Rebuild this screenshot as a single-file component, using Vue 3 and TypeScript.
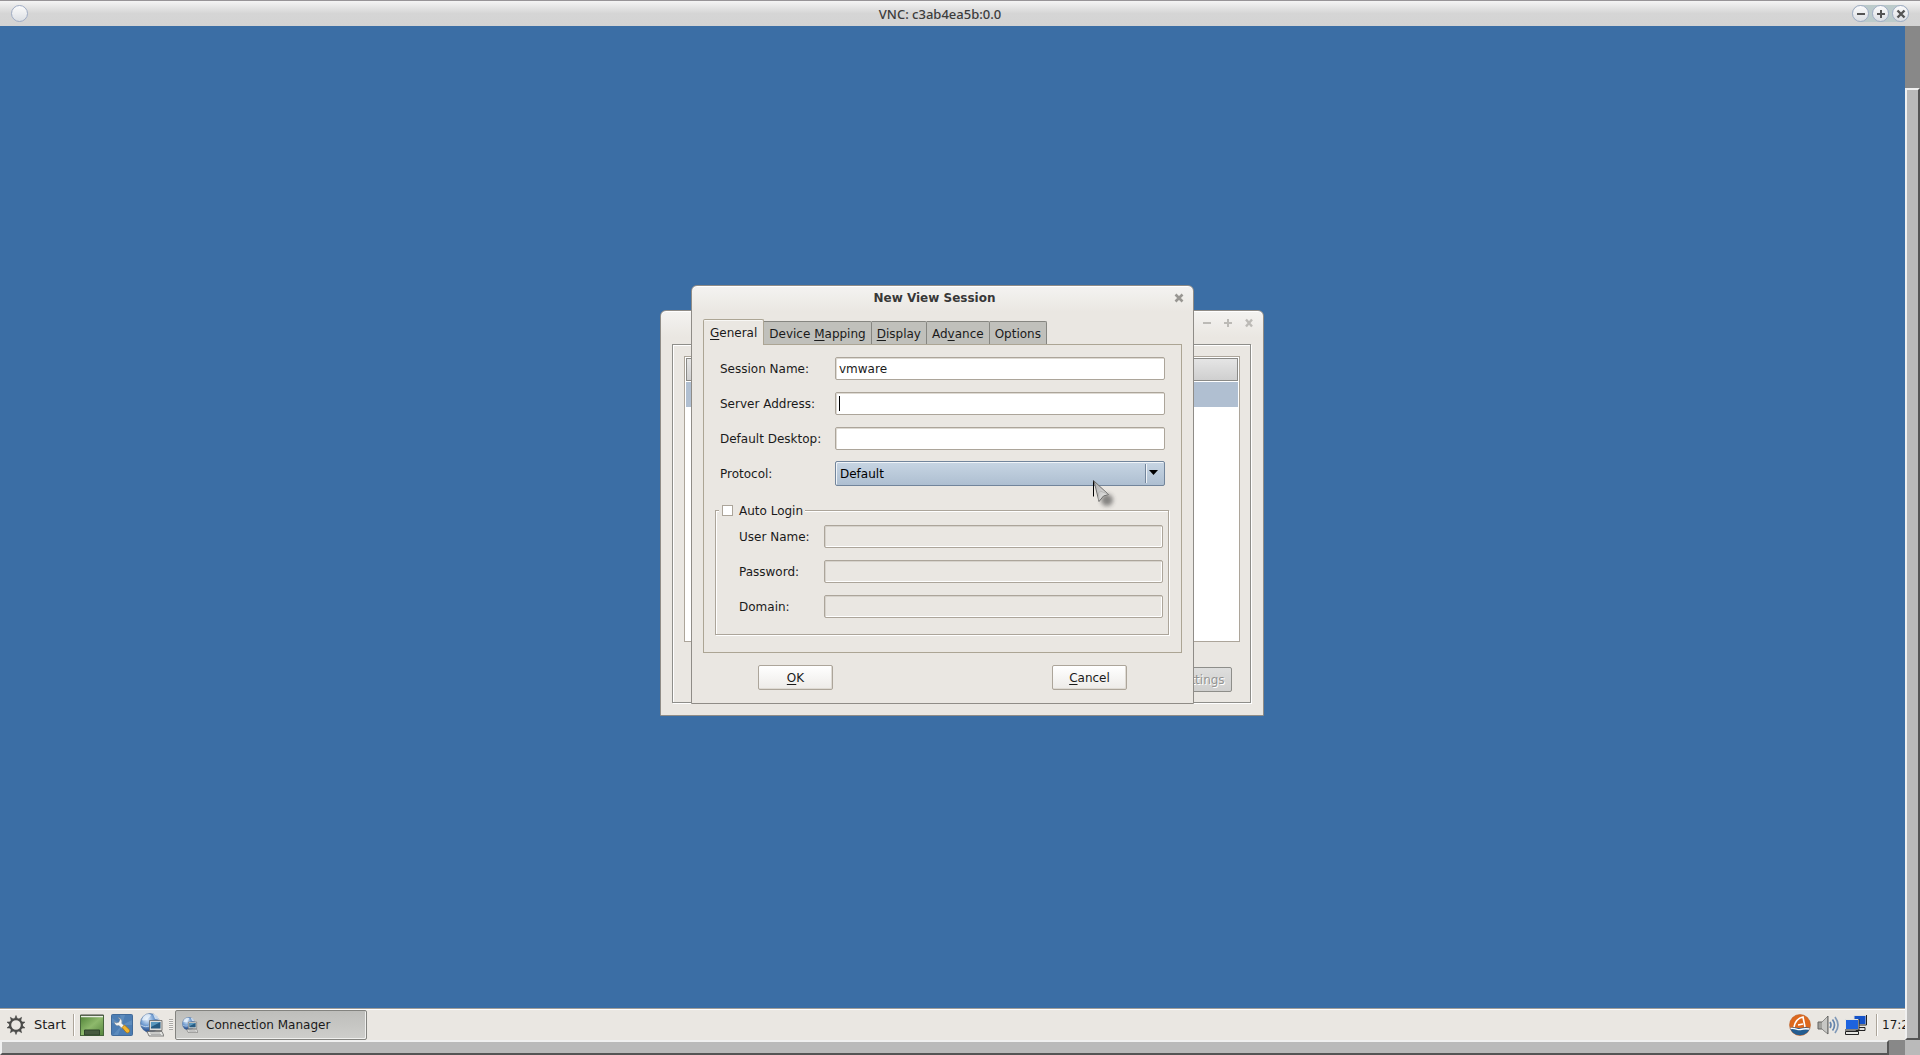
<script setup lang="ts">
import { ref } from 'vue'

interface Tab {
  id: string
  before: string
  key: string
  after: string
}

interface Field {
  id: string
  label: string
}

const tabs: Tab[] = [
  { id: 'general', before: '', key: 'G', after: 'eneral' },
  { id: 'mapping', before: 'Device ', key: 'M', after: 'apping' },
  { id: 'display', before: '', key: 'D', after: 'isplay' },
  { id: 'advance', before: 'Ad', key: 'v', after: 'ance' },
  { id: 'options', before: 'Options', key: '', after: '' },
]

const loginFields: Field[] = [
  { id: 'user', label: 'User Name:' },
  { id: 'password', label: 'Password:' },
  { id: 'domain', label: 'Domain:' },
]

const activeTab = ref('general')
const sessionName = ref('vmware')
const serverAddress = ref('')
const defaultDesktop = ref('')
const protocol = ref('Default')
const autoLogin = ref(false)
</script>

<template>
  <div class="viewer">
    <header class="viewer-bar">
      <span class="orb"></span>
      <span class="viewer-title">VNC: c3ab4ea5b:0.0</span>
      <span class="viewer-controls">
        <button class="orb" type="button" aria-label="Minimize">
          <svg width="16" height="16" viewBox="0 0 16 16"><path d="M4 8h8" stroke="#555" stroke-width="2" /></svg>
        </button>
        <button class="orb" type="button" aria-label="Maximize">
          <svg width="16" height="16" viewBox="0 0 16 16"><path d="M4 8h8M8 4v8" stroke="#555" stroke-width="2" /></svg>
        </button>
        <button class="orb" type="button" aria-label="Close">
          <svg width="16" height="16" viewBox="0 0 16 16"><path d="M4.500 4.500l7 7M11.500 4.500l-7 7" stroke="#555" stroke-width="2.400" /></svg>
        </button>
      </span>
    </header>

    <div class="viewer-body">
      <div class="remote">
        <main class="desktop">
          <section class="window manager">
            <div class="manager-bar">
              <svg width="50" height="10" viewBox="0 0 50 10" fill="none" stroke="#bcbab6">
                <path d="M0 5h8" stroke-width="2" />
                <path d="M21 5h8M25 1v8" stroke-width="2" />
                <path d="M43 1.500l6 7M49 1.500l-6 7" stroke-width="2.400" />
              </svg>
            </div>
            <div class="manager-frame">
              <div class="list">
                <div class="list-head"></div>
                <div class="list-selected"></div>
              </div>
              <div class="manager-actions">
                <button class="settings" type="button" disabled>Settings</button>
              </div>
            </div>
          </section>

          <form class="window dialog" @submit.prevent>
            <div class="dialog-bar">
              <span>New View Session</span>
              <button class="dialog-close" type="button" aria-label="Close">
                <svg width="10" height="10" viewBox="0 0 10 10"><path d="M1.500 1.500l7 7M8.500 1.500l-7 7" stroke="#999793" stroke-width="2.600" /></svg>
              </button>
            </div>

            <div class="tabs" role="tablist">
              <button
                v-for="tab in tabs"
                :key="tab.id"
                type="button"
                role="tab"
                class="tab"
                :class="{ active: tab.id === activeTab }"
                :aria-selected="tab.id === activeTab"
                @click="activeTab = tab.id"
              >{{ tab.before }}<u v-if="tab.key">{{ tab.key }}</u>{{ tab.after }}</button>
            </div>

            <div class="panel">
              <div class="rows">
                <div class="row">
                  <label for="session">Session Name:</label>
                  <input id="session" v-model="sessionName" class="field" type="text" />
                </div>
                <div class="row">
                  <label for="server">Server Address:</label>
                  <span class="control">
                    <input id="server" v-model="serverAddress" class="field" type="text" />
                    <i class="caret"></i>
                  </span>
                </div>
                <div class="row">
                  <label for="desktop">Default Desktop:</label>
                  <input id="desktop" v-model="defaultDesktop" class="field" type="text" />
                </div>
                <div class="row">
                  <label for="protocol">Protocol:</label>
                  <span class="control">
                    <select id="protocol" v-model="protocol" class="combo">
                      <option>Default</option>
                    </select>
                    <span class="combo-arrow">
                      <svg width="9" height="5" viewBox="0 0 9 5"><path d="M0 0h9L4.500 5z" /></svg>
                    </span>
                  </span>
                </div>
              </div>

              <fieldset class="group">
                <legend>
                  <input id="auto" v-model="autoLogin" type="checkbox" />
                  <label for="auto">Auto Login</label>
                </legend>
                <div v-for="field in loginFields" :key="field.id" class="row">
                  <label :for="field.id">{{ field.label }}</label>
                  <input
                    :id="field.id"
                    class="field"
                    :type="field.id === 'password' ? 'password' : 'text'"
                    :disabled="!autoLogin"
                  />
                </div>
              </fieldset>
            </div>

            <div class="actions">
              <button class="push" type="submit"><u>O</u>K</button>
              <button class="push" type="button"><u>C</u>ancel</button>
            </div>
          </form>

          <svg class="pointer" width="26" height="32" viewBox="0 0 26 32">
            <defs>
              <filter id="soft" x="-50%" y="-50%" width="200%" height="200%"><feGaussianBlur stdDeviation="2" /></filter>
              <linearGradient id="steel" x1="0" y1="0" x2="1" y2="1">
                <stop offset="0" stop-color="#aaa" /><stop offset="1" stop-color="#f0f0ee" />
              </linearGradient>
            </defs>
            <ellipse cx="14" cy="20" rx="6" ry="6" fill="#333" opacity=".55" filter="url(#soft)" />
            <path d="M.5.500v16" stroke="#000" />
            <path d="M1 1l14.500 13.500-5 1.500-4.500 5.500z" fill="url(#steel)" stroke="#6e6e6c" />
            <path d="M6 20l-.5-7 2-2 7 3" fill="none" stroke="#b8b8b6" />
          </svg>
        </main>

        <footer class="taskbar">
          <button class="start" type="button">
            <svg width="20" height="20" viewBox="0 0 20 20" fill="none" stroke="#4b4b49">
              <circle cx="10" cy="10" r="5.900" stroke-width="2.200" />
              <path
                d="M10 .5l1.200 3h-2.400zM15.600 2.300l-.8 3.200-1.900-1.400zM19 7.100l-2.500 2.100-.7-2.300zM19 12.900l-3.200.2.700-2.300zM15.600 17.700l-2.700-1.800 1.900-1.400zM10 19.500l-1.200-3h2.400zM4.400 17.700l.8-3.200 1.900 1.400zM1 12.900l2.500-2.100.7 2.300zM1 7.100l3.200-.2-.7 2.300zM4.400 2.300l2.700 1.800-1.900 1.400z"
                fill="#4b4b49"
                stroke-width=".6"
              />
            </svg>
            <span>Start</span>
          </button>
          <i class="divider"></i>
          <button class="launcher" type="button" aria-label="Show desktop">
            <svg width="24" height="22" viewBox="0 0 24 22">
              <defs>
                <linearGradient id="grass" x1="0" y1="0" x2="1" y2="1">
                  <stop offset="0" stop-color="#4f8136" /><stop offset=".5" stop-color="#8eb96c" /><stop offset="1" stop-color="#54843c" />
                </linearGradient>
              </defs>
              <rect x=".5" y="1.500" width="23" height="20" fill="url(#grass)" stroke="#46653a" />
              <path d="M1 2.500h22" stroke="#e8eee4" stroke-width="1.500" />
              <path d="M.5 1h23" stroke="#42453f" />
              <path d="M4.500 21v-5h15v5z" fill="#46593e" stroke="#2f432a" />
            </svg>
          </button>
          <button class="launcher" type="button" aria-label="Control panel">
            <svg width="22" height="22" viewBox="0 0 22 22">
              <rect x=".5" y=".5" width="21" height="21" rx="1" fill="#4c7db3" stroke="#426b99" />
              <path d="M11 11L1 4v5zM11 11L14 1H9zM11 11l10-5v5zM11 11L2 21h5z" fill="#79a2cc" opacity=".4" />
              <path d="M7 3.500l2 2-1.200 2.700-2.800.8-1.500-1.500c-.3 3 2 4.800 4.500 4l3 3 2.500-2.500-2.800-2.800C11.500 6.500 10 4 7 3.500z" fill="#f4f4f1" stroke="#6d7a88" stroke-width=".5" />
              <path d="M11 13.500l2.500-2.500 4.700 4.500c1.300 2-1 4.500-3 3z" fill="#f2b52f" stroke="#a87413" stroke-width=".8" />
            </svg>
          </button>
          <button class="launcher" type="button" aria-label="Connection Manager">
            <svg width="24" height="24" viewBox="0 0 24 24">
              <defs>
                <radialGradient id="globe" cx=".35" cy=".3" r=".7">
                  <stop offset="0" stop-color="#e4eefa" /><stop offset=".5" stop-color="#6f9bd0" /><stop offset="1" stop-color="#173b7a" />
                </radialGradient>
                <g id="network">
                  <circle cx="10" cy="10" r="9.500" fill="url(#globe)" stroke="#4a6d9c" stroke-width=".6" />
                  <path d="M3 4c4-4 6-3 8-2-1 3-3 3-4 5-2 0-4 1-5 0zM13 1c3 0 6 3 6 6l-4-1z" fill="#eef5fc" opacity=".75" />
                  <path d="M1 12c3 2 6 2 8 1" fill="none" stroke="#d3e3f4" stroke-width=".8" />
                  <path d="M9.500 7.500h12.500v10H9.500z" fill="#ddddda" stroke="#666" stroke-width=".8" />
                  <path d="M11 9h9.500v6.500H11z" fill="#275b82" />
                  <path d="M11 9h9.500L11 14z" fill="#5a98be" />
                  <path d="M7 18.500h15l2 4.500H9z" fill="#e5e5e2" stroke="#666" stroke-width=".8" />
                  <path d="M10 20h10M11 21.500h10" stroke="#999" stroke-width=".7" />
                </g>
              </defs>
              <use href="#network" />
            </svg>
          </button>
          <i class="grip"></i>
          <button class="task" type="button">
            <svg width="16" height="16" viewBox="0 0 24 24"><use href="#network" /></svg>
            <span>Connection Manager</span>
          </button>
          <div class="tray">
            <svg width="22" height="22" viewBox="0 0 22 22">
              <circle cx="11" cy="11" r="10.500" fill="#dd681d" stroke="#b9632d" stroke-width=".6" />
              <path d="M1 14c5-2 8 1 11 0s6-1 9 0A10.500 10.500 0 0 1 1 14z" fill="#235d91" />
              <path d="M1.500 14.500c5-1 7 2 10 1s6-1 9-.5" fill="none" stroke="#fff" stroke-width="1.400" />
              <path d="M5 13c1-5 4-9 9-10l2 10M9 11l5-1" fill="none" stroke="#fff" stroke-width="1.600" />
            </svg>
            <svg width="22" height="20" viewBox="0 0 22 20">
              <path d="M1 7h4l6-6v18l-6-5H1z" fill="#a1a19d" stroke="#656562" />
              <path d="M5 7v7l5 4V2z" fill="#d7d7d4" opacity=".7" />
              <g fill="none" stroke="#6484ac" stroke-width="1.700">
                <path d="M13 7q2 3 0 6" /><path d="M15.500 4.500q4 5.500 0 11" /><path d="M18 2q6 8 0 16" opacity=".8" />
              </g>
            </svg>
            <svg width="22" height="20" viewBox="0 0 22 20">
              <path d="M9 .5h12v9H9z" fill="#1452c9" stroke="#ddd" /><path d="M21.500 0v10H9" fill="none" stroke="#222" />
              <path d="M11 12.500h9v3h-9z" fill="#ddd" stroke="#222" />
              <path d="M.5 4.500h13v10H.5z" fill="#1d63df" stroke="#e4e4e0" /><path d="M14 4v11H0" fill="none" stroke="#222" />
              <path d="M.5 16.500h13v3H.5z" fill="#e6e6e2" stroke="#222" />
            </svg>
            <i class="divider"></i>
            <span class="clock">17:2</span>
          </div>
        </footer>
      </div>
      <div class="scroll-y"><div class="thumb-y"></div></div>
    </div>
    <div class="scroll-x"><div class="thumb-x"></div><div class="corner"></div></div>
  </div>
</template>

<style>
body {
  overflow: hidden;
}
</style>

<style scoped>
.viewer,
.viewer * {
  box-sizing: border-box;
}
.viewer {
  display: flex;
  flex-direction: column;
  height: 100vh;
  font: 12px/16px "DejaVu Sans", sans-serif;
  color: #1a1a1a;
}
button,
input,
select {
  margin: 0;
  padding: 0;
  border: 0;
  background: none;
  font: inherit;
  color: inherit;
  outline: none;
}
svg {
  display: block;
  flex: none;
}
u {
  text-decoration-thickness: 1px;
  text-underline-offset: 2px;
}

.viewer-bar {
  display: flex;
  align-items: center;
  justify-content: space-between;
  flex: none;
  height: 26px;
  padding: 0 11px;
  border-top: 1px solid #979497;
  background: linear-gradient(#f4f4f4, #d5d5d5 50%, #d3d3d3);
}
.viewer-title {
  flex: 1;
  text-align: center;
  font: 500 13px/18px "Noto Sans", sans-serif;
  color: #3c3c3c;
}
.viewer-controls {
  display: flex;
  gap: 3px;
  border-radius: 9px;
  background: #bccbcb;
}
.orb {
  display: flex;
  align-items: center;
  justify-content: center;
  flex: none;
  width: 17px;
  height: 17px;
  border: 1px solid #a0adc5;
  border-radius: 50%;
  background: linear-gradient(#fbfbfb, #dcdfe4);
}

.viewer-body {
  display: flex;
  flex: 1;
  min-height: 0;
}
.remote {
  display: flex;
  flex-direction: column;
  flex: 1;
  min-width: 0;
}
.desktop {
  position: relative;
  flex: 1;
  min-height: 0;
  background: #3b6ea5;
}
.scroll-y {
  width: 15px;
  padding-top: 62px;
  background: #888;
}
.thumb-y {
  height: 100%;
  border: 2px solid;
  border-color: #f0f0f0 #555 #555 #f0f0f0;
  background: #bababa;
}
.scroll-x {
  display: flex;
  flex: none;
  height: 15px;
  background: #888;
}
.thumb-x {
  flex: 1;
  margin-right: 16px;
  border: 2px solid;
  border-color: #f0f0f0 #555 #555 #f0f0f0;
  background: #bababa;
}
.corner {
  width: 15px;
  background: #bababa;
}

.window {
  position: absolute;
  display: flex;
  flex-direction: column;
  border: 1px solid #8f8c87;
  border-radius: 6px 6px 0 0;
  background: linear-gradient(#f4f3f1, #eae7e2 26px);
  box-shadow: inset 0 1px #fff;
}
.manager {
  left: 660px;
  top: 284px;
  width: 604px;
  height: 406px;
  padding: 0 12px 12px 11px;
}
.manager-bar {
  display: flex;
  justify-content: flex-end;
  height: 33px;
  margin-right: -2px;
  padding-top: 7px;
}
.manager-frame {
  display: flex;
  flex-direction: column;
  flex: 1;
  padding: 11px 10px 10px 11px;
  border: 1px solid #8e8e8a;
  box-shadow: inset 1px 1px #fff, 1px 1px #fff;
}
.list {
  flex: 1;
  padding: 1px;
  border: 1px solid #aca59a;
  background: #fff;
}
.list-head {
  height: 23px;
  border: 1px solid #8a8a87;
  background: linear-gradient(#e5e5e5, #cfcfcf);
}
.list-selected {
  height: 25px;
  margin-top: 1px;
  background: #b0bfd1;
}
.manager-actions {
  display: flex;
  justify-content: flex-end;
  padding: 25px 8px 0 0;
}
.settings {
  width: 64px;
  height: 25px;
  border: 1px solid #8e8e8a;
  border-radius: 2px;
  background: linear-gradient(#dededd, #cfcfce);
  color: #949492;
  text-shadow: 1px 1px #fff;
}

.dialog {
  left: 691px;
  top: 259px;
  width: 503px;
  padding: 0 11px 13px;
}
.dialog-bar {
  display: flex;
  align-items: center;
  justify-content: center;
  position: relative;
  height: 24px;
  margin-bottom: 9px;
  padding-right: 16px;
  font-weight: bold;
  color: #383838;
}
.dialog-close {
  position: absolute;
  right: -2px;
  top: 7px;
}
.tabs {
  display: flex;
  align-items: flex-end;
  height: 25px;
}
.tab {
  height: 23px;
  padding: 2px 5px 0;
  border: 1px solid #868681;
  border-width: 1px 1px 0 0;
  border-radius: 0 2px 0 0;
  background: #c0c0bb;
}
.tab.active {
  position: relative;
  height: 26px;
  margin-bottom: -1px;
  padding: 0 6px;
  border-color: #aca594;
  border-left-width: 1px;
  border-radius: 2px 2px 0 0;
  background: #eae7e2;
  box-shadow: inset 0 1px #f8f7f5;
}
.panel {
  padding: 11px 11px 17px;
  border: 1px solid #aca594;
}
.rows {
  display: flex;
  flex-direction: column;
  gap: 10px;
  padding: 0 5px;
}
.row {
  display: flex;
  align-items: center;
  height: 25px;
}
.row label {
  flex: none;
  width: 115px;
}
.control {
  position: relative;
  display: flex;
  flex: 1;
}
.field {
  flex: 1;
  min-width: 0;
  height: 23px;
  padding: 0 3px;
  border: 1px solid #aca59a;
  border-radius: 2px;
  background: #fff;
  box-shadow: inset 1px 1px #dedad3;
}
.field:disabled {
  background: #eae7e2;
  box-shadow: inset 1px 1px #d6d2cb, inset -1px -1px #fff;
}
.caret {
  position: absolute;
  left: 4px;
  top: 4px;
  width: 1px;
  height: 15px;
  background: #000;
}
.combo {
  flex: 1;
  height: 25px;
  padding: 0 4px;
  border: 1px solid #72859b;
  border-radius: 2px;
  appearance: none;
  background: linear-gradient(#c7d5e3, #aebfd1);
  box-shadow: inset 1px 1px #f0f4f8;
  color: #000;
}
.combo-arrow {
  position: absolute;
  right: 1px;
  top: 3px;
  display: flex;
  align-items: center;
  width: 19px;
  height: 19px;
  padding: 0 0 2px 3px;
  border-left: 1px solid #72859b;
  box-shadow: inset 1px 0 #f0f4f8;
  pointer-events: none;
}
.group {
  display: flex;
  flex-direction: column;
  gap: 10px;
  min-width: 0;
  margin: 16px 1px 0 0;
  padding: 5px 5px 15px 23px;
  border: 1px solid #aca59a;
  box-shadow: inset 1px 1px #fff, 1px 1px #fff;
}
.group legend {
  display: flex;
  align-items: center;
  height: 17px;
  margin-left: -20px;
  padding: 0 2px 0 3px;
  background: #eae7e2;
}
.group legend input {
  width: 11px;
  height: 11px;
  margin-right: 6px;
  border: 1px solid #aca59a;
  appearance: none;
  background: #fff;
}
.group .row label {
  width: 85px;
}
.actions {
  display: flex;
  justify-content: space-between;
  padding: 12px 55px 0;
}
.push {
  width: 75px;
  height: 25px;
  border: 1px solid #aca59a;
  border-radius: 2px;
  background: linear-gradient(#fff, #edebe8);
  box-shadow: inset -1px -1px #dedad3;
}
.pointer {
  position: absolute;
  left: 1093px;
  top: 454px;
  pointer-events: none;
}

.taskbar {
  display: flex;
  align-items: center;
  flex: none;
  height: 32px;
  padding-left: 6px;
  border-top: 1px solid #a39f99;
  background: #eae7e2;
  box-shadow: inset 0 1px #fff;
  overflow: hidden;
}
.start {
  display: flex;
  align-items: center;
  gap: 8px;
  width: 67px;
  font-size: 13px;
}
.divider {
  width: 2px;
  height: 22px;
  margin-right: 5px;
  border-left: 1px solid #aca59a;
  background: #fff;
}
.launcher {
  margin-right: 7px;
}
.grip {
  width: 4px;
  height: 11px;
  margin: 0 2px 0 -2px;
  background: repeating-linear-gradient(#aaa8a4 0 1px, #f5f4f2 1px 2px);
}
.task {
  display: flex;
  align-items: center;
  gap: 8px;
  width: 192px;
  height: 30px;
  padding-left: 6px;
  border: 1px solid #83837f;
  border-radius: 2px;
  background: linear-gradient(#bebebb, #cececb);
  box-shadow: inset -1px -1px #f0f0ee;
}
.tray {
  display: flex;
  align-items: center;
  gap: 6px;
  width: 116px;
  margin-left: auto;
  overflow: hidden;
}
.tray .divider {
  flex: none;
  margin: 0 -2px 0 3px;
}
.clock {
  white-space: nowrap;
}
</style>
